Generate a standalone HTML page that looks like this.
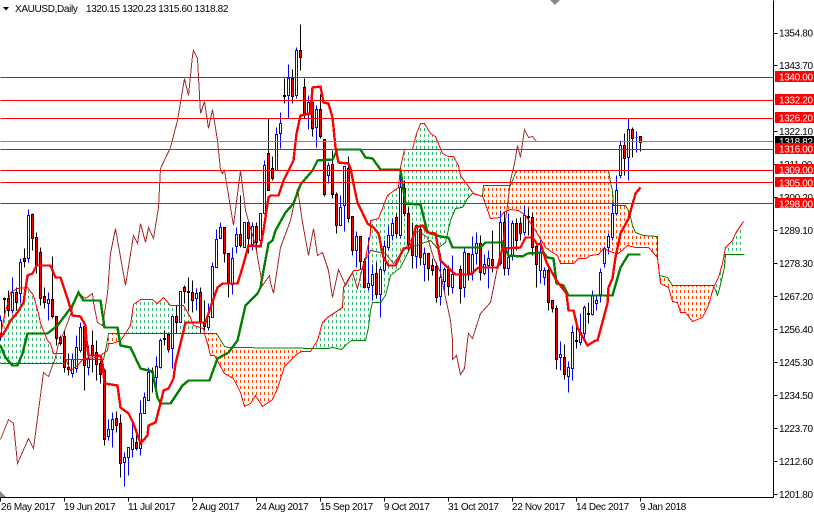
<!DOCTYPE html>
<html><head><meta charset="utf-8"><title>XAUUSD Daily</title>
<style>
html,body{margin:0;padding:0;background:#fff;width:814px;height:514px;overflow:hidden}
svg{position:absolute;left:0;top:0;display:block}
text{font-family:"Liberation Sans",sans-serif;font-size:10px;fill:#000;letter-spacing:-.35px}
.l{fill:#fff}
</style></head><body>
<svg width="814" height="514" viewBox="0 0 814 514" xmlns="http://www.w3.org/2000/svg">
<defs>
<pattern id="g" patternUnits="userSpaceOnUse" width="4" height="6"><rect x="0" y="2" width="1" height="3" fill="#3cb371" shape-rendering="crispEdges"/></pattern>
<pattern id="o" patternUnits="userSpaceOnUse" width="4" height="6"><rect x="0" y="2" width="1" height="3" fill="#ff4500" shape-rendering="crispEdges"/></pattern>
</defs>
<rect width="814" height="514" fill="#fff"/>
<!-- cloud fills -->
<g shape-rendering="crispEdges">
<polygon fill="url(#g)" points="0,335 4,315 10,292 17,288 27,287 33,295 38,313 40,323 47,340 50,343 53,353 63,353 63,363 0,363"/>
<polygon fill="url(#o)" points="105,345 108,333 118,333 120,340 112,343 108,343"/>
<polygon fill="url(#g)" points="120,340 125,333 130,325 133,304 140,299 152,299 157,303 163,297 170,305 183,305 190,317 193,325 203,328 204,333 125,333"/>
<polygon fill="url(#o)" points="204,333 216,333 224,346 228,347 311,347 301,351 296,354 284,366 277,388 272,399 262,406 255,395 250,403 244,406 240,392 233,378 224,373 214,355 210,355 207,343"/>
<polygon fill="url(#g)" points="313,347 317,340 322,322 327,317 333,313 342,307 343,287 353,270 357,270 363,268 370,233 370,220 378,218 387,195 398,187 400,167 404,149 412,149 416,133 420,123 424,123 430,133 435,136 442,153 448,156 453,156 458,165 460,175 465,182 473,193 482,196 472,193 467,198 462,207 455,208 450,220 445,242 437,248 430,240 410,247 400,267 390,275 385,295 380,302 372,302 370,310 368,327 365,340 351,340 346,344 341,349 332,347 327,348"/>
<polygon fill="url(#o)" points="483,185 510,185 516,170 608,170 610,182 612,190 613,205 625,205 629,212 632,225 635,232 643,235 657,236 657,257 648,247 635,247 627,245 618,253 612,252 603,248 598,254 590,255 585,258 578,258 573,263 560,263 557,255 552,252 545,247 535,230 525,215 518,210 510,209 503,212 500,217 490,218 483,198"/>
<polygon fill="url(#o)" points="657,257 659,275 667,277 672,285 713,285 708,305 702,317 692,321 685,312 680,312 677,302 672,301 668,287 660,283"/>
<polygon fill="url(#g)" points="713,287 718,277 722,263 725,247 732,240 735,233 743,221 744,221 744,254 725,254 724,267 719,288 717,295"/>
</g>
<g transform="translate(.5 .5)" shape-rendering="crispEdges">
<!-- candles: blue wicks -->
<path fill="none" stroke="#00f" d="M0 315V340M12 277V313M20 258V302M28 209V262M48 292V320M72 353V377M76 335V372M80 322V352M88 345V375M108 419V440M112 412V447M124 452V486M128 447V475M132 423V457M140 400V455M144 392V413M148 367V400M156 356V387M160 338V368M172 316V368M180 291V322M196 288V310M208 303V330M212 262V317M216 229V267M220 222V238M232 247V294M236 227V253M244 222V247M252 222V250M260 213V245M264 160V213M276 127V170M280 112V148M288 64V118M296 47V98M308 95V129M316 105V147M328 162V183M340 195V225M344 166V231M356 231V267M368 237V290M372 264V300M380 267V317M384 240V272M388 225V250M392 218V240M400 175V238M416 225V268M424 247V281M440 253V305M444 267V291M452 255V293M464 248V297M472 236V280M476 232V264M484 254V275M488 250V288M500 210V265M508 213V275M512 220V260M524 205V235M540 240V283M544 267V285M560 341V370M568 361V392M572 325V380M580 313V345M584 305V340M592 290V315M596 295V310M600 268V302M604 246V267M608 233V254M612 203V240M616 175V215M620 140V178M628 118V180M636 131V152"/>
<!-- blue bodies -->
<path fill="#fff" stroke="#00f" d="M-1 320H1V333H-1ZM11 292H13V310H11ZM19 262H21V293H19ZM27 215H29V258H27ZM47 299H49V303H47ZM71 359H73V373H71ZM75 347H77V368H75ZM79 327H81V350H79ZM87 358H89V367H87ZM107 429H109V436H107ZM111 419H113V429H111ZM123 457H125V462H123ZM127 447H129V457H127ZM131 438H133V449H131ZM139 413H141V448H139ZM143 397H145V413H143ZM147 372H149V400H147ZM155 366H157V377H155ZM159 340H161V367H159ZM171 316H173V348H171ZM179 291H181V322H179ZM195 293H197V298H195ZM207 316H209V327H207ZM211 266H213V317H211ZM215 239H217V267H215ZM219 227H221V238H219ZM231 258H233V284H231ZM235 234H237V246H235ZM243 222H245V247H243ZM251 226H253V244H251ZM259 213H261V240H259ZM263 165H265V213H263ZM275 134H277V170H275ZM279 123H281V133H279ZM287 78H289V95H287ZM295 50H297V95H295ZM307 102H309V113H307ZM315 109H317V127H315ZM327 165H329V175H327ZM339 207H341V225H339ZM343 166H345V205H343ZM355 236H357V250H355ZM367 283H369V287H367ZM371 274H373V285H371ZM379 269H381V294H379ZM383 246H385V270H383ZM387 235H389V247H387ZM391 223H393V235H391ZM399 187H401V235H399ZM415 225H417V256H415ZM423 253H425V264H423ZM439 277H441V296H439ZM443 269H445V281H443ZM451 274H453V287H451ZM463 252H465V287H463ZM471 254H473V273H471ZM475 243H477V253H475ZM483 264H485V273H483ZM487 258H489V265H487ZM499 222H501V263H499ZM507 257H509V268H507ZM511 223H513V256H511ZM523 215H525V232H523ZM539 253H541V270H539ZM543 270H545V277H543ZM559 354H561V357H559ZM567 367H569V376H567ZM571 332H573V368H571ZM579 332H581V342H579ZM583 307H585V333H583ZM591 295H593V314H591ZM595 300H597V303H595ZM599 272H601V294H599ZM603 248H605V263H603ZM607 236H609V247H607ZM611 213H613V237H611ZM615 190H617V213H615ZM619 145H621V175H619ZM627 129H629V157H627ZM635 137H637V137H635Z"/>
<!-- black wicks -->
<path fill="none" stroke="#000" d="M4 297V317M8 290V316M16 287V310M24 248V267M32 213V250M36 232V273M40 247V305M44 287V308M52 256V318M56 316V345M60 335V345M64 330V372M68 353V375M84 322V390M92 330V372M96 340V380M100 360V383M104 368V445M116 411V432M120 414V477M136 432V450M152 367V392M164 330V345M168 334V352M176 305V333M184 285V303M188 277V311M192 280V312M200 287V333M204 300V330M224 227V262M228 253V297M240 195V247M248 220V253M256 222V250M268 118V190M272 156V180M284 78V103M292 69V103M300 24V70M304 78V118M312 93V136M320 94V138M324 139V196M332 150V198M336 192V233M348 156V222M352 216V255M360 236V269M364 258V288M376 262V298M396 213V237M404 180V216M408 207V252M412 222V268M420 225V265M428 253V280M432 258V275M436 262V302M448 265V295M460 265V303M468 253V280M480 235V280M492 230V272M504 212V275M516 218V250M520 217V240M528 208V235M532 212V255M536 245V287M548 268V310M552 300V312M556 305V369M564 344V379M576 318V348M588 302V323M624 133V175M632 127V157M640 136V151"/>
<!-- bear bodies -->
<path fill="#f00" stroke="#000" d="M3 298H5V299H3ZM7 298H9V310H7ZM15 292H17V302H15ZM23 258H25V261H23ZM31 214H33V238H31ZM35 237H37V265H35ZM39 252H41V298H39ZM43 296H45V302H43ZM51 299H53V316H51ZM55 316H57V338H55ZM59 337H61V343H59ZM63 336H65V367H63ZM67 367H69V369H67ZM83 326H85V365H83ZM91 345H93V355H91ZM95 352H97V364H95ZM99 363H101V374H99ZM103 370H105V439H103ZM115 418H117V425H115ZM119 423H121V463H119ZM135 442H137V448H135ZM151 371H153V372H151ZM163 338H165V339H163ZM167 334H169V349H167ZM175 316H177V322H175ZM183 287H185V291H183ZM187 291H189V292H187ZM191 292H193V300H191ZM199 292H201V322H199ZM203 323H205V326H203ZM223 227H225V253H223ZM227 253H229V283H227ZM239 234H241V245H239ZM247 222H249V238H247ZM255 226H257V242H255ZM267 153H269V190H267ZM271 168H273V178H271ZM283 95H285V96H283ZM291 78H293V96H291ZM299 50H301V57H299ZM303 87H305V113H303ZM311 102H313V128H311ZM319 109H321V136H319ZM323 139H325V194H323ZM331 164H333V194H331ZM335 194H337V225H335ZM347 168H349V218H347ZM351 216H353V250H351ZM359 236H361V261H359ZM363 261H365V287H363ZM375 273H377V294H375ZM395 217H397V233H395ZM403 188H405V213H403ZM407 213H409V244H407ZM411 238H413V255H411ZM419 229H421V257H419ZM427 253H429V268H427ZM431 265H433V270H431ZM435 266H437V297H435ZM447 269H449V286H447ZM459 269H461V288H459ZM467 253H469V273H467ZM479 243H481V272H479ZM491 259H493V265H491ZM503 222H505V268H503ZM515 223H517V240H515ZM519 223H521V233H519ZM527 216H529V217H527ZM531 217H533V247H531ZM535 246H537V264H535ZM547 270H549V302H547ZM551 300H553V308H551ZM555 308H557V359H555ZM563 357H565V374H563ZM575 340H577V341H575ZM587 313H589V314H587ZM623 145H625V158H623ZM631 129H633V138H631ZM639 136H641V142H639Z"/>
<!-- Chikou -->
<polyline fill="none" stroke="#a52a2a" points="0,439 8,419 13,423 17,463 28,438 33,448 43,372 48,376 55,357 58,343 62,335 68,320 75,298 78,293 85,298 92,293 93,302 97,322 102,325 107,293 110,253 115,228 125,285 133,235 137,243 140,223 145,242 148,227 153,238 158,207 160,168 170,147 177,120 184,78 188,95 192,55 193,50 197,58 200,113 204,101 208,128 212,109 217,140 220,170 222,173 224,170 230,207 233,225 240,170 245,210 255,245 262,285 269,275 270,282 273,293 280,247 290,220 297,188 302,222 308,255 313,228 317,255 322,252 328,270 332,297 338,269 345,285 352,272 357,288 363,263 370,250 385,253 393,263 403,250 417,230 427,237 433,257 440,272 445,297 450,320 452,340 452,359 456,355 460,374 464,368 467,340 468,333 472,338 480,313 490,302 497,267 500,263 505,220 510,180 514,163 517,145 520,157 524,129 528,137 532,136 536,141"/>
<!-- Senkou A (red) / B (green) -->
<polyline fill="none" stroke="#008000" points="0,363 63,363 66,359 103,359 106,345 108,333 216,333 224,346 228,347 327,348 332,347 341,349 346,344 351,340 365,340 368,327 370,310 372,302 380,302 385,295 390,275 400,267 410,247 430,240 437,248 445,242 450,220 455,208 462,207 467,198 472,193 482,196 483,185 510,185 516,170 608,170 610,182 612,190 613,205 625,205 629,212 632,225 635,232 643,235 657,236 657,257 659,275 667,277 672,285 713,285 717,295 719,288 724,267 725,254 744,254"/>
<polyline fill="none" stroke="#f00" points="0,335 4,315 10,292 17,288 27,287 33,295 38,313 40,323 47,340 50,343 53,353 63,353 70,370 77,365 83,358 97,357 107,350 108,343 112,343 120,340 125,333 130,325 133,304 140,299 152,299 157,303 163,297 170,305 183,305 190,317 193,325 203,328 204,333 207,343 210,355 214,355 224,373 233,378 240,392 244,406 250,403 255,395 262,406 272,399 277,388 284,366 296,354 301,351 310,351 317,340 322,322 327,317 333,313 342,307 343,287 353,270 357,270 363,268 370,233 370,220 378,218 387,195 398,187 400,167 404,149 412,149 416,133 420,123 424,123 430,133 435,136 442,153 448,156 453,156 458,165 460,175 465,182 473,193 482,196 483,198 490,218 500,217 503,212 510,209 518,210 525,215 535,230 545,247 552,252 557,255 560,263 573,263 578,258 585,258 590,255 598,254 603,248 612,252 618,253 627,245 635,247 648,247 657,257 660,283 668,287 672,301 677,302 680,312 685,312 692,321 702,317 708,305 713,287 718,277 722,263 725,247 732,240 735,233 743,221"/>
<!-- Kijun -->
<polyline fill="none" stroke="#008000" stroke-width="2.4" points="0,345 5,357 12,365 17,365 22,353 27,333 47,333 57,325 72,305 78,292 83,300 100,300 104,327 117,327 120,345 130,347 140,368 152,371 157,397 160,403 170,403 182,385 188,380 209,380 217,358 228,352 237,340 245,305 257,293 260,287 263,270 268,243 272,240 275,230 285,212 293,203 300,184 312,170 317,160 332,159 337,149 360,149 365,157 372,158 380,169 400,169 403,190 405,203 420,204 427,232 440,236 448,237 452,247 480,247 485,242 502,242 508,255 522,256 527,253 543,252 547,257 553,258 556,283 563,285 568,295 612,295 620,267 628,254 640,254"/>
<!-- Tenkan -->
<polyline fill="none" stroke="#f00" stroke-width="2.4" points="0,337 5,330 10,320 17,312 23,302 27,275 32,273 36,265 50,265 55,277 60,277 67,298 72,315 80,316 85,325 86,340 88,355 100,355 102,363 104,383 117,385 120,407 128,413 133,423 140,443 147,435 148,425 155,422 160,403 163,390 168,388 173,378 175,363 180,343 185,322 205,322 210,307 217,287 222,283 237,283 242,267 248,245 260,246 263,230 268,197 270,195 278,195 283,180 287,172 293,160 296,133 300,115 310,113 312,87 320,86 323,102 328,103 332,117 335,147 338,162 348,163 350,168 353,183 357,202 367,223 373,227 378,233 383,257 388,265 395,265 403,248 410,247 415,227 422,225 427,232 435,233 440,260 445,265 455,274 470,274 478,267 497,267 502,248 520,247 525,237 532,237 537,244 540,243 546,262 556,280 566,293 568,310 573,310 577,327 583,338 587,345 595,340 597,340 607,303 608,287 612,278 615,257 620,233 628,218 635,193 640,187"/>
<!-- horizontal levels -->
<path fill="none" stroke="#f00" d="M0 77H773M0 100H773M0 118H773M0 149H773M0 170H773M0 182H773M0 203H773"/>
<path fill="none" stroke="#808890" d="M0 141H773"/>
<!-- axes -->
<path fill="none" stroke="#000" d="M773 0V497M0 497H773M773 33H777M773 65H777M773 131H777M773 164H777M773 197H777M773 230H777M773 263H777M773 296H777M773 329H777M773 362H777M773 395H777M773 428H777M773 461H777M773 494H777M0 497V501M64 497V501M128 497V501M192 497V501M256 497V501M320 497V501M384 497V501M448 497V501M512 497V501M576 497V501M640 497V501"/>
</g>
<!-- markers -->
<polygon points="3,7 9,7 6,10.5" fill="#000"/>
<polygon points="550,0 560,0 555,5" fill="#7f8a94"/>
<polygon points="0,491 6,497 0,497" fill="#7f8a94"/>
<!-- header -->
<text x="15" y="12">XAUUSD,Daily</text>
<text x="86" y="12">1320.15 1320.23 1315.60 1318.82</text>
<!-- price axis -->
<g>
<text x="779" y="36.5">1354.80</text>
<text x="779" y="69">1343.70</text>
<text x="779" y="135">1322.10</text>
<text x="779" y="168">1311.00</text>
<text x="779" y="201">1300.20</text>
<text x="779" y="234">1289.10</text>
<text x="779" y="267">1278.30</text>
<text x="779" y="300">1267.20</text>
<text x="779" y="333">1256.40</text>
<text x="779" y="366">1245.30</text>
<text x="779" y="399">1234.50</text>
<text x="779" y="432">1223.70</text>
<text x="779" y="465">1212.60</text>
<text x="779" y="498">1201.80</text>
</g>
<g shape-rendering="crispEdges">
<rect x="775" y="71" width="39" height="11" fill="#f00"/>
<rect x="775" y="94" width="39" height="11" fill="#f00"/>
<rect x="775" y="112" width="39" height="11" fill="#f00"/>
<rect x="775" y="136" width="39" height="11" fill="#000"/>
</g>
<text class="l" x="779" y="80.5">1340.00</text>
<text class="l" x="779" y="103.5">1332.20</text>
<text class="l" x="779" y="121.5">1326.20</text>
<text class="l" x="779" y="145">1318.82</text>
<g shape-rendering="crispEdges">
<rect x="775" y="143" width="39" height="11" fill="#f00"/>
<rect x="775" y="164" width="39" height="10" fill="#f00"/>
<rect x="775" y="177" width="39" height="10" fill="#f00"/>
<rect x="775" y="198" width="39" height="10" fill="#f00"/>
</g>
<text class="l" x="779" y="152.5">1316.00</text>
<text class="l" x="779" y="173.5">1309.00</text>
<text class="l" x="779" y="186.5">1305.00</text>
<text class="l" x="779" y="207.5">1298.00</text>
<!-- date axis -->
<text x="1" y="510">26 May 2017</text>
<text x="64" y="510">19 Jun 2017</text>
<text x="128" y="510">11 Jul 2017</text>
<text x="192" y="510">2 Aug 2017</text>
<text x="256" y="510">24 Aug 2017</text>
<text x="320" y="510">15 Sep 2017</text>
<text x="384" y="510">9 Oct 2017</text>
<text x="448" y="510">31 Oct 2017</text>
<text x="512" y="510">22 Nov 2017</text>
<text x="576" y="510">14 Dec 2017</text>
<text x="640" y="510">9 Jan 2018</text>
</svg>
</body></html>
